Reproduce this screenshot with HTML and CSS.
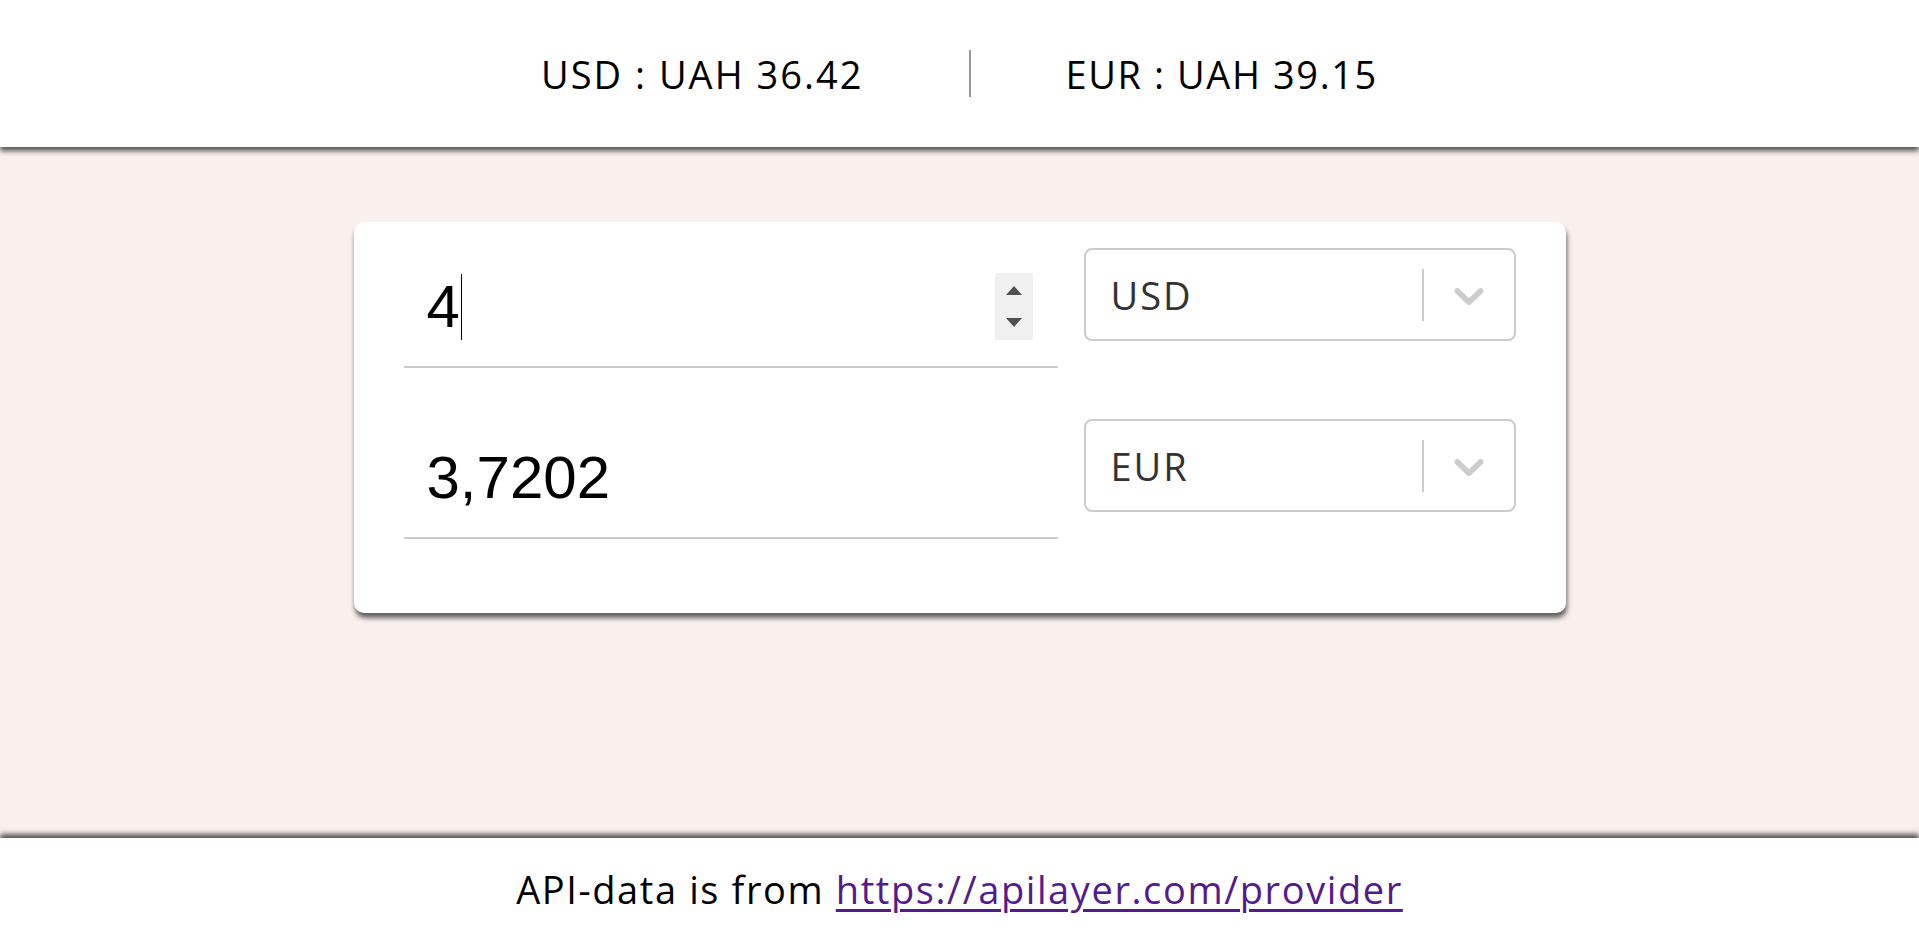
FILE: index.html
```html
<!DOCTYPE html>
<html lang="en">
<head>
<meta charset="utf-8">
<title>Currency converter</title>
<link rel="stylesheet" href="styles.css">
</head>
<body>
<header class="rates">
  <div class="rate rate-first">USD : UAH 36.42</div>
  <div class="divider"></div>
  <div class="rate rate-second">EUR : UAH 39.15</div>
</header>
<main class="main">
  <section class="card">
    <div class="row">
      <div class="amount">
        <span class="amount-value">4</span><span class="caret"></span>
        <div class="spinner"><span class="tri tri-up"></span><span class="tri tri-down"></span></div>
      </div>
      <div class="select">
        <div class="select-value">USD</div>
        <span class="select-sep"></span>
        <div class="select-indicator">
          <svg viewBox="0 0 20 20" width="50" height="50" aria-hidden="true"><path d="M4.516 7.548c0.436-0.446 1.043-0.481 1.576 0l3.908 3.747 3.908-3.747c0.533-0.481 1.141-0.446 1.574 0 0.436 0.445 0.408 1.197 0 1.615-0.406 0.418-4.695 4.502-4.695 4.502-0.217 0.223-0.502 0.335-0.787 0.335s-0.57-0.112-0.789-0.335c0 0-4.287-4.084-4.695-4.502s-0.436-1.170 0-1.615z"/></svg>
        </div>
      </div>
    </div>
    <div class="row">
      <div class="amount">
        <span class="amount-value">3,7202</span>
      </div>
      <div class="select">
        <div class="select-value">EUR</div>
        <span class="select-sep"></span>
        <div class="select-indicator">
          <svg viewBox="0 0 20 20" width="50" height="50" aria-hidden="true"><path d="M4.516 7.548c0.436-0.446 1.043-0.481 1.576 0l3.908 3.747 3.908-3.747c0.533-0.481 1.141-0.446 1.574 0 0.436 0.445 0.408 1.197 0 1.615-0.406 0.418-4.695 4.502-4.695 4.502-0.217 0.223-0.502 0.335-0.787 0.335s-0.57-0.112-0.789-0.335c0 0-4.287-4.084-4.695-4.502s-0.436-1.170 0-1.615z"/></svg>
        </div>
      </div>
    </div>
  </section>
</main>
<footer class="footer">API-data is from <a class="footer-link" href="https://apilayer.com/provider">https://apilayer.com/provider</a></footer>
</body>
</html>
```

FILE: styles.css
```css
* {
  box-sizing: border-box;
}

html, body {
  margin: 0;
  padding: 0;
}

body {
  min-height: 100vh;
  display: flex;
  flex-direction: column;
  background: #f9f0ee;
  font-family: "Open Sans", "Liberation Sans", sans-serif;
  color: #000;
}

.rates {
  position: relative;
  z-index: 2;
  height: 147px;
  flex: none;
  background: #fff;
  display: flex;
  justify-content: center;
  align-items: center;
  box-shadow: 0 4px 5px rgba(0, 0, 0, 0.65);
}

.rate {
  font-size: 38px;
  letter-spacing: 2px;
  line-height: 1;
  white-space: nowrap;
}

.rate-first {
  padding-right: 106px;
}

.rate-second {
  padding-left: 94px;
  letter-spacing: 1.6px;
}

.divider {
  width: 2px;
  height: 47px;
  background: #999;
}

.main {
  flex: 1;
  display: flex;
  flex-direction: column;
  align-items: center;
}

.card {
  width: 1212px;
  margin-top: 75px;
  background: #fff;
  border-radius: 10px;
  padding: 26px 50px 74px;
  box-shadow: 1px 5px 5px rgba(0, 0, 0, 0.6);
  display: flex;
  flex-direction: column;
  gap: 51px;
}

.row {
  display: flex;
  align-items: flex-start;
  gap: 26px;
}

.amount {
  flex: 1;
  display: flex;
  align-items: center;
  padding: 25px 25px 26px 23px;
  border-bottom: 2px solid #cccccc;
  font-family: "Liberation Sans", Arial, sans-serif;
  font-size: 60px;
  line-height: 67px;
  height: 120px;
  color: #000;
}

.amount-value {
  display: block;
}

.caret {
  width: 1px;
  height: 66px;
  margin-left: 1px;
  background: #000;
}

.spinner {
  margin-left: auto;
  width: 38px;
  height: 67px;
  background: #f0f0f0;
  display: flex;
  flex-direction: column;
  align-items: center;
  justify-content: center;
  gap: 23px;
}

.tri {
  width: 0;
  height: 0;
  border-left: 8px solid transparent;
  border-right: 8px solid transparent;
}

.tri-up {
  border-bottom: 9px solid #505050;
}

.tri-down {
  border-top: 9px solid #505050;
}

.select {
  width: 432px;
  height: 93px;
  border: 2px solid #cccccc;
  border-radius: 8px;
  background: #fff;
  display: flex;
  align-items: center;
}

.select-value {
  flex: 1;
  padding-left: 25px;
  font-size: 38px;
  letter-spacing: 2px;
  color: #333;
  line-height: 1;
}

.select-sep {
  width: 2px;
  height: 52px;
  background: #cccccc;
}

.select-indicator {
  padding: 0 20px;
  display: flex;
  align-items: center;
}

.select-indicator svg {
  display: block;
  fill: #cccccc;
}

.footer {
  position: relative;
  z-index: 2;
  height: 102px;
  flex: none;
  background: #fff;
  display: flex;
  justify-content: center;
  align-items: center;
  font-size: 38px;
  letter-spacing: 1.6px;
  white-space: pre;
  box-shadow: 0 -4px 5px rgba(0, 0, 0, 0.65);
}

.footer-link {
  color: #551a8b;
  text-decoration: underline;
  text-decoration-thickness: 3px;
  text-underline-offset: 5px;
}
```
